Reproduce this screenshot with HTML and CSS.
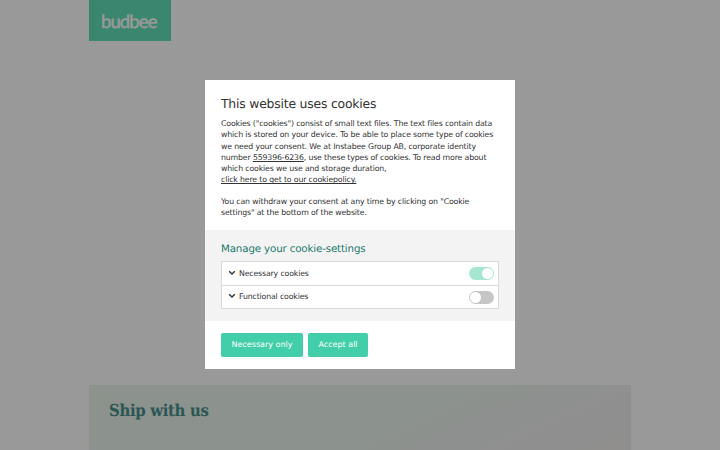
FILE: index.html
```html
<!DOCTYPE html>
<html lang="en">
<head>
  <meta charset="UTF-8" />
  <meta name="viewport" content="width=device-width, initial-scale=1.0"/>
  <title>Budbee</title>
  <link rel="stylesheet" href="styles.css">
</head>
<body>

  <!-- Page behind the dialog -->
  <div class="page">
    <header class="header">
      <div class="logo">budbee</div>
    </header>
    <section class="ship">
      <h2>Ship with us</h2>
    </section>
  </div>

  <!-- Cookie dialog -->
  <div class="overlay">
    <div class="dialog">
      <div class="intro">
        <h1>This website uses cookies</h1>
        <p>Cookies ("cookies") consist of small text files. The text files contain data<br>
        which is stored on your device. To be able to place some type of cookies<br>
        we need your consent. We at Instabee Group AB, corporate identity<br>
        number <a href="#">559396-6236</a>, use these types of cookies. To read more about<br>
        which cookies we use and storage duration,<br>
        <a href="#">click here to get to our cookiepolicy.</a></p>
        <p>You can withdraw your consent at any time by clicking on "Cookie<br>
        settings" at the bottom of the website.</p>
      </div>

      <div class="settings">
        <h3>Manage your cookie-settings</h3>
        <div class="list">
          <div class="row">
            <svg class="chevron" viewBox="0 0 8 6"><path d="M1.2 1.2 L4 4 L6.8 1.2"/></svg>
            <span class="label">Necessary cookies</span>
            <span class="toggle on"></span>
          </div>
          <div class="row">
            <svg class="chevron" viewBox="0 0 8 6"><path d="M1.2 1.2 L4 4 L6.8 1.2"/></svg>
            <span class="label">Functional cookies</span>
            <span class="toggle"></span>
          </div>
        </div>
      </div>

      <div class="actions">
        <button class="btn necessary">Necessary only</button>
        <button class="btn accept">Accept all</button>
      </div>
    </div>
  </div>

</body>
</html>
```

FILE: styles.css
```css
* {
  box-sizing: border-box;
  margin: 0;
  padding: 0;
}

body {
  font-family: "DejaVu Sans", sans-serif;
  text-rendering: geometricPrecision;
  background: #fff;
  height: 450px;
  overflow: hidden;
}

.page {
  width: 542px;
  height: 450px;
  margin: 0 auto;
  display: flex;
  flex-direction: column;
  justify-content: space-between;
}

.logo {
  width: 82px;
  height: 41px;
  padding-left: 12px;
  background: #62dfba;
  color: #fff;
  font-family: Lato, sans-serif;
  font-size: 18.5px;
  -webkit-text-stroke: 0.4px #fff;
  letter-spacing: -0.9px;
  line-height: 42px;
}

.ship {
  height: 65px;
  padding: 14px 20px;
  background: linear-gradient(155deg, #e9f3ea 0%, #e9f3ec 58%, #efefef 84%, #f0eeec 100%);
}

.ship h2 {
  font-family: "DejaVu Serif Condensed", "DejaVu Serif", serif;
  font-stretch: condensed;
  font-size: 16.5px;
  letter-spacing: -0.3px;
  line-height: 24px;
  color: #468f8b;
}

.overlay {
  position: fixed;
  inset: 0;
  background: rgba(0,0,0,0.4);
  display: flex;
  align-items: center;
  justify-content: center;
}

.dialog {
  width: 310px;
  height: 289px;
  margin-bottom: 1px;
  background: #fff;
  color: #333;
}

.intro {
  height: 150px;
  padding: 15px 16px 0;
}

.intro h1 {
  font-size: 12.4px;
  letter-spacing: -0.2px;
  font-weight: normal;
  line-height: 17px;
  margin-bottom: 6px;
}

.intro p {
  font-size: 7.8px;
  letter-spacing: -0.145px;
  line-height: 11.25px;
  margin-bottom: 10px;
  white-space: nowrap;
}

.intro a {
  color: inherit;
}

.settings {
  height: 91px;
  padding: 12px 16px 0;
  background: #f3f3f3;
}

.settings h3 {
  font-size: 10.3px;
  letter-spacing: -0.16px;
  font-weight: normal;
  line-height: 14px;
  margin-bottom: 5px;
  color: #1d7a6c;
}

.list {
  width: 278px;
  background: #fff;
  border: 1px solid #d9d9d9;
}

.row {
  height: 23px;
  display: flex;
  align-items: center;
  padding: 0 4px 0 6px;
}

.row + .row {
  border-top: 1px solid #d9d9d9;
}

.chevron {
  width: 8px;
  height: 6px;
  margin: 0 3px 2px 0;
  fill: none;
  stroke: #333;
  stroke-width: 1.4;
}

.label {
  flex: 1;
  font-size: 7.8px;
  letter-spacing: -0.15px;
  padding-bottom: 1px;
}

.toggle {
  width: 25px;
  height: 13px;
  padding: 1px;
  border-radius: 7px;
  background: #c6c6c6;
  display: flex;
}

.toggle::before {
  content: "";
  width: 11px;
  height: 11px;
  border-radius: 50%;
  background: #fff;
}

.toggle.on {
  justify-content: flex-end;
  background: #a6e7d2;
}

.actions {
  display: flex;
  gap: 5px;
  padding: 12px 16px;
}

.btn {
  height: 24px;
  border: none;
  border-radius: 2px;
  background: #42cea8;
  color: #fff;
  font-family: inherit;
  font-size: 8px;
  text-rendering: inherit;
  padding-bottom: 1px;
}

.necessary {
  width: 82px;
}

.accept {
  width: 60px;
}
```
